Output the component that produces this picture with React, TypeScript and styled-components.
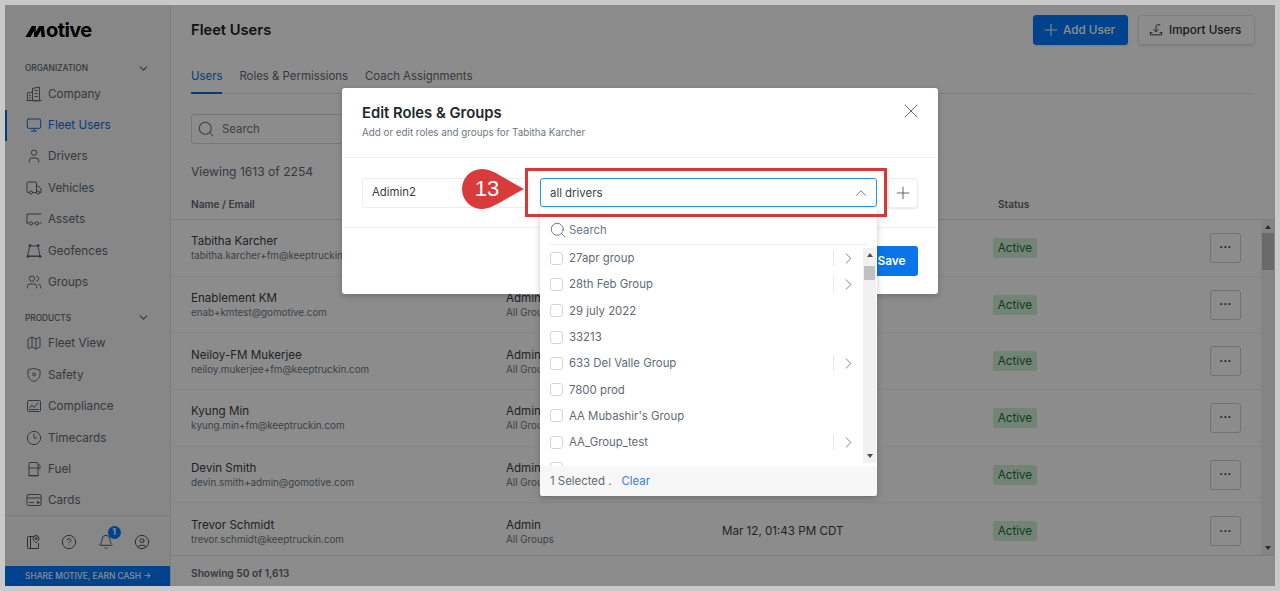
import React, { FC, ReactElement, ReactNode } from "react";
import styled, { createGlobalStyle } from "styled-components";
import {
  Bell,
  ChevronDown,
  ChevronRight,
  ChevronUp,
  CircleHelp,
  CircleUser,
  Clock3,
  Map as MapIcon,
  Monitor,
  Plus,
  Search,
  User,
  Users,
  X,
} from "lucide-react";

const GlobalStyle = createGlobalStyle`
  html, body {
    margin: 0;
    padding: 0;
    background: #c9c9c9;
    overflow: hidden;
  }
  * {
    box-sizing: border-box;
  }
  body {
    font-family: Inter, "Liberation Sans", sans-serif;
    color: #2a2f35;
  }
`;

const Screen = styled.div`
  width: 1280px;
  height: 591px;
  padding: 5px;
`;
const Frame = styled.div`
  position: relative;
  width: 1270px;
  height: 581px;
  display: flex;
  overflow: hidden;
  background: #fff;
`;
const Backdrop = styled.div`
  position: absolute;
  inset: 0;
  background: rgba(0, 0, 0, 0.45);
`;

/* sidebar */
const Sidebar = styled.aside`
  width: 166px;
  flex: none;
  display: flex;
  flex-direction: column;
  background: #f6f6f6;
  border-right: 1px solid #e3e3e3;
`;
const Brand = styled.div`
  height: 53px;
  padding: 9px 0 0 20px;
  display: flex;
  align-items: flex-start;
  font-size: 20px;
  line-height: 32px;
  font-weight: 700;
  letter-spacing: -0.6px;
  color: #000;
  svg {
    width: 21px;
    height: 11px;
    margin-top: 12px;
  }
`;
const Nav = styled.nav`
  flex: 1;
  min-height: 0;
  overflow: hidden;
`;
const SectionHead = styled.div<{ $spaced?: boolean }>`
  height: 20px;
  margin-top: ${(p) => (p.$spaced ? "10px" : "0")};
  padding: 0 20px 0 20px;
  display: flex;
  align-items: center;
  justify-content: space-between;
  font-size: 8.3px;
  font-weight: 500;
  color: #5c6670;
  svg {
    width: 13px;
    height: 13px;
  }
`;
const NavItem = styled.div<{ $active?: boolean }>`
  position: relative;
  height: 31.4px;
  padding-left: 21px;
  display: flex;
  align-items: center;
  gap: 6px;
  font-size: 11.7px;
  color: ${(p) => (p.$active ? "#0a6fe0" : "#5f6a74")};
  svg {
    width: 16px;
    height: 16px;
    flex: none;
    stroke-width: 1.5;
  }
  &::before {
    content: "";
    display: ${(p) => (p.$active ? "block" : "none")};
    position: absolute;
    left: 0;
    top: 1px;
    bottom: 0;
    width: 2px;
    background: #0a6fe0;
  }
`;
const SideTools = styled.div`
  height: 51px;
  flex: none;
  border-top: 1px solid #e3e3e3;
  padding: 1px 20px 0;
  display: flex;
  align-items: center;
  justify-content: space-between;
  color: #4d5761;
  svg {
    width: 16px;
    height: 16px;
    stroke-width: 1.5;
  }
`;
const BellWrap = styled.div`
  position: relative;
  display: flex;
`;
const BellBadge = styled.span`
  position: absolute;
  left: 10px;
  top: -8px;
  width: 13px;
  height: 13px;
  border-radius: 50%;
  background: #007aff;
  color: #fff;
  font-size: 8.5px;
  font-weight: 700;
  line-height: 13px;
  text-align: center;
`;
const Share = styled.div`
  height: 20px;
  flex: none;
  padding-left: 20px;
  background: #007aff;
  color: #fff;
  font-size: 8.4px;
  font-weight: 500;
  line-height: 20px;
  white-space: nowrap;
`;

/* main column */
const Main = styled.main`
  flex: 1;
  min-width: 0;
  display: flex;
  flex-direction: column;
`;
const TitleBar = styled.header`
  padding: 10px 20px 0;
  height: 40px;
  flex: none;
  display: flex;
  align-items: flex-start;
  gap: 10px;
`;
const PageTitle = styled.h1`
  margin: 0 auto 0 0;
  font-size: 14.7px;
  line-height: 31px;
  font-weight: 600;
  color: #1c2126;
`;
const HeadButton = styled.button<{ $primary?: boolean }>`
  width: ${(p) => (p.$primary ? "95px" : "117px")};
  height: 30px;
  padding: 0 0 0 ${(p) => (p.$primary ? "7px" : "10px")};
  display: flex;
  align-items: center;
  gap: ${(p) => (p.$primary ? "2px" : "6px")};
  border-radius: 3px;
  border: 1px solid ${(p) => (p.$primary ? "#007aff" : "#e8e8e8")};
  background: ${(p) => (p.$primary ? "#007aff" : "#fff")};
  color: ${(p) => (p.$primary ? "#fff" : "#2a2f35")};
  box-shadow: 0 1px 2px rgba(0, 0, 0, 0.12);
  font: 500 11.7px Inter, sans-serif;
  svg {
    width: ${(p) => (p.$primary ? "20px" : "14px")};
    height: ${(p) => (p.$primary ? "20px" : "14px")};
    stroke-width: 1.25;
  }
`;
const Tabs = styled.div`
  margin: 15px 20px 0;
  height: 34px;
  flex: none;
  display: flex;
  gap: 17px;
  border-bottom: 1px solid #e8e8e8;
`;
const Tab = styled.div<{ $active?: boolean }>`
  padding-top: 7px;
  height: 34px;
  font-size: 11.4px;
  line-height: 18px;
  color: ${(p) => (p.$active ? "#0a6fe0" : "#5f6a74")};
  border-bottom: ${(p) => (p.$active ? "2px solid #0a6fe0" : "0")};
`;
const SearchBox = styled.div`
  margin: 20px 0 0 20px;
  width: 300px;
  height: 30px;
  flex: none;
  padding-left: 5px;
  display: flex;
  align-items: center;
  gap: 7px;
  border: 1px solid #d9d9d9;
  border-radius: 3px;
  font-size: 11.4px;
  color: #6d7780;
  svg {
    width: 18px;
    height: 18px;
    stroke-width: 1.4;
  }
`;
const Viewing = styled.div`
  margin: 19px 0 0 20px;
  height: 18px;
  flex: none;
  font-size: 12.1px;
  line-height: 17px;
  color: #5f6a74;
`;
const TableRow = styled.div`
  display: grid;
  grid-template-columns: 315px 216px 271px 217px 31px;
  padding-left: 20px;
  align-items: center;
`;
const TableHead = styled(TableRow)`
  height: 39px;
  flex: none;
  border-bottom: 1px solid #e3e3e3;
  font-size: 10.1px;
  font-weight: 600;
  color: #5f6a74;
  padding-top: 7px;
`;
const StatusHead = styled.span`
  padding-left: 5px;
`;
const TableArea = styled.div`
  flex: 1;
  min-height: 0;
  display: flex;
  overflow: hidden;
`;
const Rows = styled.div`
  flex: 1;
  min-width: 0;
`;
const Row = styled(TableRow)`
  height: 56.7px;
  border-bottom: 1px solid #f0f0f0;
`;
const Primary = styled.div`
  font-size: 11.6px;
  line-height: 16px;
  color: #3a4148;
`;
const Secondary = styled.div`
  font-size: 9.8px;
  line-height: 13px;
  color: #6d7780;
`;
const DateCell = styled.div`
  font-size: 11.6px;
  color: #3a4148;
`;
const Badge = styled.span`
  justify-self: start;
  width: 44px;
  height: 20px;
  border-radius: 2px;
  background: #d2f0d8;
  color: #226b3b;
  font-size: 11.6px;
  line-height: 20px;
  text-align: center;
`;
const RowButton = styled.button`
  width: 31px;
  height: 30px;
  padding: 0;
  display: flex;
  align-items: center;
  justify-content: center;
  border: 1px solid #d0d0d0;
  border-radius: 3px;
  background: #fff;
  color: #111;
  font: 700 11px/1 Inter, sans-serif;
  letter-spacing: 0.5px;
`;
const Footer = styled.footer`
  height: 31px;
  flex: none;
  border-top: 1px solid #e3e3e3;
  padding: 4px 0 0 20px;
  display: flex;
  align-items: center;
  font-size: 10.2px;
  font-weight: 600;
  color: #5f6a74;
`;

/* scrollbars */
const Track = styled.div<{ $page?: boolean }>`
  width: ${(p) => (p.$page ? "14px" : "13px")};
  flex: none;
  display: flex;
  flex-direction: column;
  align-items: center;
  justify-content: space-between;
  background: #f1f1f1;
  padding: 5px 0;
  position: relative;
`;
const TrackUp = styled.i`
  border: 3.5px solid transparent;
  border-top: 0;
  border-bottom: 4px solid #505050;
`;
const TrackDown = styled.i`
  border: 3.5px solid transparent;
  border-bottom: 0;
  border-top: 4px solid #505050;
`;
const Thumb = styled.div<{ $page?: boolean }>`
  position: absolute;
  left: 1px;
  right: 1px;
  top: ${(p) => (p.$page ? "13px" : "18px")};
  height: ${(p) => (p.$page ? "37px" : "14px")};
  background: #c1c1c1;
`;

/* modal */
const Modal = styled.section`
  position: absolute;
  left: 337px;
  top: 83px;
  width: 596px;
  height: 206px;
  background: #fff;
  border-radius: 3px;
  box-shadow: 0 2px 6px rgba(0, 0, 0, 0.2);
`;
const ModalHead = styled.div`
  position: relative;
  height: 70px;
  padding: 16px 20px 0;
  border-bottom: 1px solid #f0f0f0;
`;
const ModalTitle = styled.h2`
  margin: 0;
  font-size: 14.8px;
  line-height: 19px;
  font-weight: 600;
  color: #22272c;
`;
const ModalSub = styled.p`
  margin: 3px 0 0;
  font-size: 9.8px;
  line-height: 13px;
  color: #6d7780;
`;
const CloseIcon = styled(X)`
  position: absolute;
  right: 15px;
  top: 11px;
  width: 24px;
  height: 24px;
  stroke-width: 0.9;
  color: #555;
`;
const ModalBody = styled.div`
  height: 70px;
  padding: 20px 20px 0;
  border-bottom: 1px solid #f0f0f0;
  display: flex;
  align-items: flex-start;
`;
const RoleField = styled.div`
  width: 168px;
  height: 30px;
  padding-left: 9px;
  border: 1px solid #ececec;
  border-radius: 3px;
  font-size: 11.4px;
  line-height: 27px;
  color: #3a4148;
`;
const SelectWrap = styled.div`
  position: relative;
  width: 337px;
  margin: 0 11px 0 10px;
`;
const SelectField = styled.div`
  height: 29px;
  padding: 0 6px 0 9px;
  display: flex;
  align-items: center;
  justify-content: space-between;
  border: 1px solid #2196f3;
  border-radius: 3px;
  font-size: 11.4px;
  color: #3a4148;
  svg {
    width: 18px;
    height: 18px;
    stroke-width: 1.1;
    color: #555;
  }
`;
const Highlight = styled.div`
  position: absolute;
  left: -15px;
  top: -10px;
  width: 362px;
  height: 49px;
  border: 3px solid #d9363a;
  pointer-events: none;
`;
const Callout = styled.div`
  position: absolute;
  left: -78px;
  top: -9px;
  width: 62px;
  height: 40px;
  color: #fff;
  font: 400 22px/40px "Liberation Sans", Arial, sans-serif;
  text-align: center;
  padding-right: 12px;
  isolation: isolate;
  svg {
    position: absolute;
    inset: 0;
    z-index: -1;
  }
`;
const PlusButton = styled.button`
  width: 30px;
  height: 30px;
  padding: 0;
  display: flex;
  align-items: center;
  justify-content: center;
  border: 1px solid #ececec;
  border-radius: 3px;
  background: #fff;
  color: #555;
  box-shadow: 0 1px 2px rgba(0, 0, 0, 0.1);
  svg {
    width: 20px;
    height: 20px;
    stroke-width: 1.1;
  }
`;
const ModalFoot = styled.div`
  display: flex;
  justify-content: flex-end;
  padding: 18px 20px 0;
`;
const SaveButton = styled.button`
  width: 60px;
  height: 30px;
  padding: 0 0 0 7px;
  border: 0;
  border-radius: 3px;
  background: #0a74e8;
  color: #fff;
  font: 600 11.8px Inter, sans-serif;
`;

/* group dropdown */
const Dropdown = styled.div`
  position: absolute;
  left: 0;
  top: 30px;
  width: 337px;
  height: 288px;
  display: flex;
  flex-direction: column;
  background: #fff;
  border-radius: 0 0 3px 3px;
  box-shadow: 0 2px 6px rgba(0, 0, 0, 0.22);
`;
const DropSearch = styled.div`
  height: 37px;
  flex: none;
  margin: 0 9px;
  padding-top: 7px;
  display: flex;
  align-items: center;
  gap: 2px;
  border-bottom: 1px solid #f0f0f0;
  font-size: 11.4px;
  color: #6d7780;
  svg {
    width: 18px;
    height: 18px;
    stroke-width: 1.3;
  }
`;
const DropBody = styled.div`
  flex: 1;
  min-height: 0;
  display: flex;
`;
const DropList = styled.div`
  flex: 1;
  min-width: 0;
  height: 220.5px;
  overflow: hidden;
`;
const DropTrackWrap = styled.div`
  height: 215px;
  margin: 3px 1px 0 0;
  display: flex;
`;
const GroupRow = styled.div`
  height: 26.3px;
  padding-left: 10px;
  display: flex;
  align-items: center;
  gap: 6px;
  font-size: 11.4px;
  color: #5f6a74;
`;
const CheckBox = styled.span`
  width: 13px;
  height: 13px;
  flex: none;
  border: 1px solid #d5d5d5;
  border-radius: 3px;
`;
const GroupName = styled.span`
  flex: 1;
`;
const Expand = styled.span`
  width: 30px;
  height: 16px;
  flex: none;
  display: flex;
  align-items: center;
  justify-content: center;
  border-left: 1px solid #e8e8e8;
  color: #666;
  svg {
    width: 19px;
    height: 19px;
    stroke-width: 1;
  }
`;
const DropFoot = styled.div`
  height: 30.5px;
  flex: none;
  padding: 1px 0 0 10px;
  display: flex;
  align-items: center;
  background: #f7f7f7;
  font-size: 11.4px;
  color: #5f6a74;
  border-radius: 0 0 3px 3px;
`;
const ClearLink = styled.span`
  margin-left: 10px;
  color: #2f80ed;
`;

const Glyph: FC<{ children: ReactNode }> = ({ children }) => (
  <svg viewBox="0 0 16 16" fill="none" stroke="currentColor" strokeLinejoin="round" strokeLinecap="round">
    <g strokeWidth={1}>{children}</g>
  </svg>
);

const CompanyIcon = () => (
  <Glyph>
    <path d="M6.500 14.500v-12l7-1.500v13.500zM1.500 14.500V7l5-1M1 14.500h14M9 4.500h2.500M9 7.500h2.500M9 10.500h2.500M3.500 9.500h1M3.500 12h1" />
  </Glyph>
);
const TruckIcon = () => (
  <Glyph>
    <path d="M3 12.500H2a1 1 0 0 1-1-1V3a1 1 0 0 1 1-1h7.500a1 1 0 0 1 1 1v9.500H7M10.500 6h2l2.500 3v3.500h-1.500" />
    <circle cx="5" cy="12.500" r="1.600" />
    <circle cx="12" cy="12.500" r="1.600" />
  </Glyph>
);
const TrailerIcon = () => (
  <Glyph>
    <path d="M1 12V3h14M1 12h1.500M8 12h1M14 12h1" />
    <circle cx="5" cy="12.500" r="1.600" />
    <circle cx="11" cy="12.500" r="1.600" />
  </Glyph>
);
const GeofenceIcon = () => (
  <Glyph>
    <path d="M4 3h8l2 10H2zM2 13.500h12" />
    <circle cx="4" cy="2.500" r="1" fill="currentColor" />
    <circle cx="12" cy="2.500" r="1" fill="currentColor" />
    <circle cx="2" cy="13.500" r="1" fill="currentColor" />
    <circle cx="14" cy="13.500" r="1" fill="currentColor" />
  </Glyph>
);
const ShieldIcon = () => (
  <Glyph>
    <path d="M8 1.500l6 1.700v4.300c0 3.400-2.500 5.800-6 7-3.500-1.200-6-3.600-6-7V3.200z" />
    <circle cx="8" cy="7.500" r="1.500" />
  </Glyph>
);
const ComplianceIcon = () => (
  <Glyph>
    <rect x="1.500" y="2.500" width="13" height="11" rx="1" />
    <path d="M3.500 10l2.500-3 2 2.500 4-4.500M3.500 11.500h9" />
  </Glyph>
);
const FuelIcon = () => (
  <Glyph>
    <path d="M3 14.500V2.500a1 1 0 0 1 1-1h7a1 1 0 0 1 1 1v12zM3 7h9M2.500 14.500h10M12 3l2 1.500v3l-2 1" />
  </Glyph>
);
const CardIcon = () => (
  <Glyph>
    <rect x="1" y="2.500" width="14" height="11" rx="1.500" />
    <path d="M1 6h14M3.500 10.500h4" />
    <circle cx="12" cy="10.500" r="1" fill="currentColor" />
  </Glyph>
);
const GuideIcon = () => (
  <Glyph>
    <path d="M9 14.500H3.500a1 1 0 0 1-1-1v-10a1 1 0 0 1 1-1H8M5.500 2.500v12M9 14.500h4.500V9.500" />
    <path d="M11 1.500a3 3 0 0 1 3 3c0 2-3 4.500-3 4.500s-3-2.500-3-4.500a3 3 0 0 1 3-3z" />
    <circle cx="11" cy="4.500" r="1" />
  </Glyph>
);
const ImportIcon = () => (
  <Glyph>
    <path d="M8 10V4c0-1 .6-2 2-2h2.500M5.500 7.500L8 10l2.500-2.500M1.500 11v2.500h13V11M1.500 11h2M12.500 11h2" />
  </Glyph>
);

const organization: [string, ReactElement, boolean?][] = [
  ["Company", <CompanyIcon />],
  ["Fleet Users", <Monitor />, true],
  ["Drivers", <User />],
  ["Vehicles", <TruckIcon />],
  ["Assets", <TrailerIcon />],
  ["Geofences", <GeofenceIcon />],
  ["Groups", <Users />],
];
const products: [string, ReactElement][] = [
  ["Fleet View", <MapIcon />],
  ["Safety", <ShieldIcon />],
  ["Compliance", <ComplianceIcon />],
  ["Timecards", <Clock3 />],
  ["Fuel", <FuelIcon />],
  ["Cards", <CardIcon />],
];
const users = [
  ["Tabitha Karcher", "tabitha.karcher+fm@keeptruckin.com"],
  ["Enablement KM", "enab+kmtest@gomotive.com"],
  ["Neiloy-FM Mukerjee", "neiloy.mukerjee+fm@keeptruckin.com"],
  ["Kyung Min", "kyung.min+fm@keeptruckin.com"],
  ["Devin Smith", "devin.smith+admin@gomotive.com"],
  ["Trevor Schmidt", "trevor.schmidt@keeptruckin.com"],
];
// last row is cut off by the footer, only its checkbox shows
const groups: [string, boolean][] = [
  ["27apr group", true],
  ["28th Feb Group", true],
  ["29 july 2022", false],
  ["33213", false],
  ["633 Del Valle Group", true],
  ["7800 prod", false],
  ["AA Mubashir's Group", false],
  ["AA_Group_test", true],
  ["", false],
];

export default function App(): ReactElement {
  return (
    <Screen>
      <GlobalStyle />
      <Frame>
        <Sidebar>
          <Brand>
            <svg viewBox="0 0 22 12" fill="#000">
              <path d="M0 12L7 0h4.500l-.5 7L15 0h5l1.500 12h-3.800l-.9-7-4 7H9.200l.4-7-4 7z" />
            </svg>
            otive
          </Brand>
          <Nav>
            <SectionHead>
              ORGANIZATION <ChevronDown />
            </SectionHead>
            {organization.map(([label, icon, active]) => (
              <NavItem key={label} $active={active}>
                {icon}
                {label}
              </NavItem>
            ))}
            <SectionHead $spaced>
              PRODUCTS <ChevronDown />
            </SectionHead>
            {products.map(([label, icon]) => (
              <NavItem key={label}>
                {icon}
                {label}
              </NavItem>
            ))}
          </Nav>
          <SideTools>
            <GuideIcon />
            <CircleHelp />
            <BellWrap>
              <Bell />
              <BellBadge>1</BellBadge>
            </BellWrap>
            <CircleUser />
          </SideTools>
          <Share>SHARE MOTIVE, EARN CASH →</Share>
        </Sidebar>

        <Main>
          <TitleBar>
            <PageTitle>Fleet Users</PageTitle>
            <HeadButton $primary>
              <Plus />
              Add User
            </HeadButton>
            <HeadButton>
              <ImportIcon />
              Import Users
            </HeadButton>
          </TitleBar>
          <Tabs>
            <Tab $active>Users</Tab>
            <Tab>Roles &amp; Permissions</Tab>
            <Tab>Coach Assignments</Tab>
          </Tabs>
          <SearchBox>
            <Search />
            Search
          </SearchBox>
          <Viewing>Viewing 1613 of 2254</Viewing>
          <TableHead>
            <span>Name / Email</span>
            <span />
            <span />
            <StatusHead>Status</StatusHead>
          </TableHead>
          <TableArea>
            <Rows>
              {users.map(([name, email]) => (
                <Row key={email}>
                  <div>
                    <Primary>{name}</Primary>
                    <Secondary>{email}</Secondary>
                  </div>
                  <div>
                    <Primary>Admin</Primary>
                    <Secondary>All Groups</Secondary>
                  </div>
                  <DateCell>Mar 12, 01:43 PM CDT</DateCell>
                  <Badge>Active</Badge>
                  <RowButton>···</RowButton>
                </Row>
              ))}
            </Rows>
            <Track $page>
              <TrackUp />
              <Thumb $page />
              <TrackDown />
            </Track>
          </TableArea>
          <Footer>Showing 50 of 1,613</Footer>
        </Main>

        <Backdrop />

        <Modal>
          <ModalHead>
            <ModalTitle>Edit Roles &amp; Groups</ModalTitle>
            <ModalSub>Add or edit roles and groups for Tabitha Karcher</ModalSub>
            <CloseIcon />
          </ModalHead>
          <ModalBody>
            <RoleField>Adimin2</RoleField>
            <SelectWrap>
              <SelectField>
                all drivers
                <ChevronUp />
              </SelectField>
              <Dropdown>
                <DropSearch>
                  <Search />
                  Search
                </DropSearch>
                <DropBody>
                  <DropList>
                    {groups.map(([name, nested]) => (
                      <GroupRow key={name}>
                        <CheckBox />
                        <GroupName>{name}</GroupName>
                        {nested && (
                          <Expand>
                            <ChevronRight />
                          </Expand>
                        )}
                      </GroupRow>
                    ))}
                  </DropList>
                  <DropTrackWrap>
                    <Track>
                      <TrackUp />
                      <Thumb />
                      <TrackDown />
                    </Track>
                  </DropTrackWrap>
                </DropBody>
                <DropFoot>
                  1 Selected .<ClearLink>Clear</ClearLink>
                </DropFoot>
              </Dropdown>
              <Highlight />
              <Callout>
                <svg viewBox="0 0 62 40" width="62" height="40">
                  <path
                    d="M20 0C30 0 38 7 62 20 38 33 30 40 20 40A20 20 0 0 1 20 0Z"
                    fill="#d93a3a"
                  />
                </svg>
                13
              </Callout>
            </SelectWrap>
            <PlusButton>
              <Plus />
            </PlusButton>
          </ModalBody>
          <ModalFoot>
            <SaveButton>Save</SaveButton>
          </ModalFoot>
        </Modal>
      </Frame>
    </Screen>
  );
}
